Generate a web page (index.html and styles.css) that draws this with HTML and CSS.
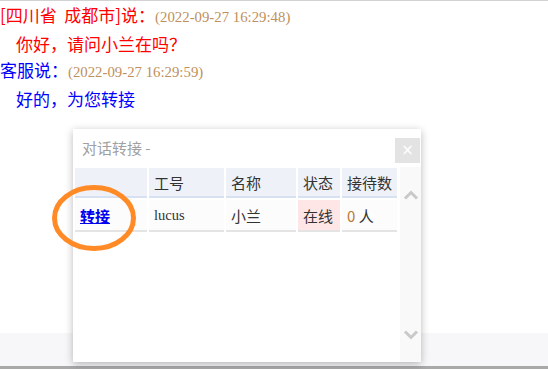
FILE: index.html
```html
<!DOCTYPE html>
<html>
<head>
	<meta charset="UTF-8">
	<title>对话转接</title>
	<link rel="stylesheet" href="styles.css">
</head>
<body>
<div class="page">
	<div class="chat">
		<div class="line guest">[四川省&nbsp; 成都市]说：<span class="time">(2022-09-27 16:29:48)</span></div>
		<div class="line guest indent">你好，请问小兰在吗？</div>
		<div class="line staff">客服说：<span class="time">(2022-09-27 16:29:59)</span></div>
		<div class="line staff indent">好的，为您转接</div>
	</div>
	<div class="inputbar"></div>
</div>

<div class="dialog">
	<div class="dialog-head">
		<span class="dialog-title">对话转接 -</span>
		<a class="dialog-close">×</a>
	</div>
	<div class="dialog-body">
		<div class="list">
			<table class="agents">
				<thead>
					<tr>
						<th class="c-act"></th>
						<th class="c-id">工号</th>
						<th class="c-name">名称</th>
						<th class="c-state">状态</th>
						<th class="c-count">接待数</th>
					</tr>
				</thead>
				<tbody>
					<tr>
						<td><a class="transfer" href="#">转接</a></td>
						<td class="latin">lucus</td>
						<td>小兰</td>
						<td class="online">在线</td>
						<td><span class="num">0</span> 人</td>
					</tr>
				</tbody>
			</table>
		</div>
		<div class="scroll">
			<svg class="chev" width="16" height="10" viewBox="0 0 16 10"><path d="M2 8.5 L8 2.5 L14 8.5" fill="none" stroke="#c9c9c9" stroke-width="3"/></svg>
			<svg class="chev" width="16" height="10" viewBox="0 0 16 10"><path d="M2 1.5 L8 7.5 L14 1.5" fill="none" stroke="#c9c9c9" stroke-width="3"/></svg>
		</div>
	</div>
</div>

<svg class="mark" width="96" height="74" viewBox="0 0 96 74">
	<ellipse cx="42" cy="34" rx="39.5" ry="30.5" fill="none" stroke="#ff8a26" stroke-width="5"/>
</svg>
</body>
</html>
```

FILE: styles.css
```css
body {
	margin: 0;
	background-color: #FFF;
	font-family: "Noto Sans CJK SC", "Microsoft YaHei", sans-serif;
}
.page {
	height: 369px;
	display: flex;
	flex-direction: column;
	border-top: 1px solid #d2d2d2;
	box-sizing: border-box;
}
.chat {
	flex: 1;
	padding-top: 1px;
}
.line {
	font-size: 17px;
	line-height: 26.6px;
	white-space: nowrap;
}
.indent {
	padding-left: 16px;
}
.guest {
	color: #F00;
}
.staff {
	color: #00F;
}
.time {
	font-family: "Liberation Serif", serif;
	font-size: 14.8px;
	color: #c0905c;
}
.inputbar {
	height: 33px;
	background-color: #f7f7f9;
	border-bottom: 3px solid #a9a9a9;
}

/* transfer dialog, sits over the chat */
.dialog {
	position: absolute;
	left: 73px;
	top: 129px;
	width: 348px;
	height: 233px;
	background: #FFF;
	box-shadow: 0 2px 8px rgba(0, 0, 0, .28);
	display: flex;
	flex-direction: column;
}
.dialog-head {
	height: 38px;
	display: flex;
	align-items: flex-start;
	justify-content: space-between;
	padding: 0 1px 0 9px;
}
.dialog-title {
	font-size: 15px;
	color: #a0a0a0;
	line-height: 38px;
}
.dialog-close {
	margin-top: 9px;
	width: 25px;
	height: 25px;
	background: #e3e3e3;
	color: #FFF;
	font-size: 15px;
	line-height: 25px;
	text-align: center;
	font-family: "DejaVu Sans", sans-serif;
}
.dialog-body {
	flex: 1;
	display: flex;
}
.list {
	flex: 1;
}
.scroll {
	width: 21px;
	background: #f9f9f9;
	display: flex;
	flex-direction: column;
	align-items: center;
	justify-content: space-between;
	padding: 23px 0 22px;
}
.agents {
	border-spacing: 2px;
	margin-top: -1px;
	font-size: 15px;
	color: #333;
}
.agents th, .agents td {
	padding: 0 5px;
	text-align: left;
	white-space: nowrap;
}
.agents th {
	height: 28px;
	font-weight: normal;
	background: #eef2f8;
	border-bottom: 2px solid #d7e1f2;
}
.agents td {
	height: 30px;
	border-bottom: 2px solid #e4e4e4;
	background: #fcfcfc;
}
.c-act {
	width: 62px;
}
.c-id {
	width: 65px;
}
.c-name {
	width: 60px;
}
.c-state {
	width: 32px;
}
.agents td.online {
	background: #ffe6e6;
}
.latin {
	font-family: "Liberation Serif", serif;
	font-size: 14.5px;
}
.num {
	color: #b97a34;
}
.transfer {
	color: #0000ee;
	font-weight: bold;
	text-decoration: underline;
}
.mark {
	position: absolute;
	left: 52px;
	top: 184px;
}
```
